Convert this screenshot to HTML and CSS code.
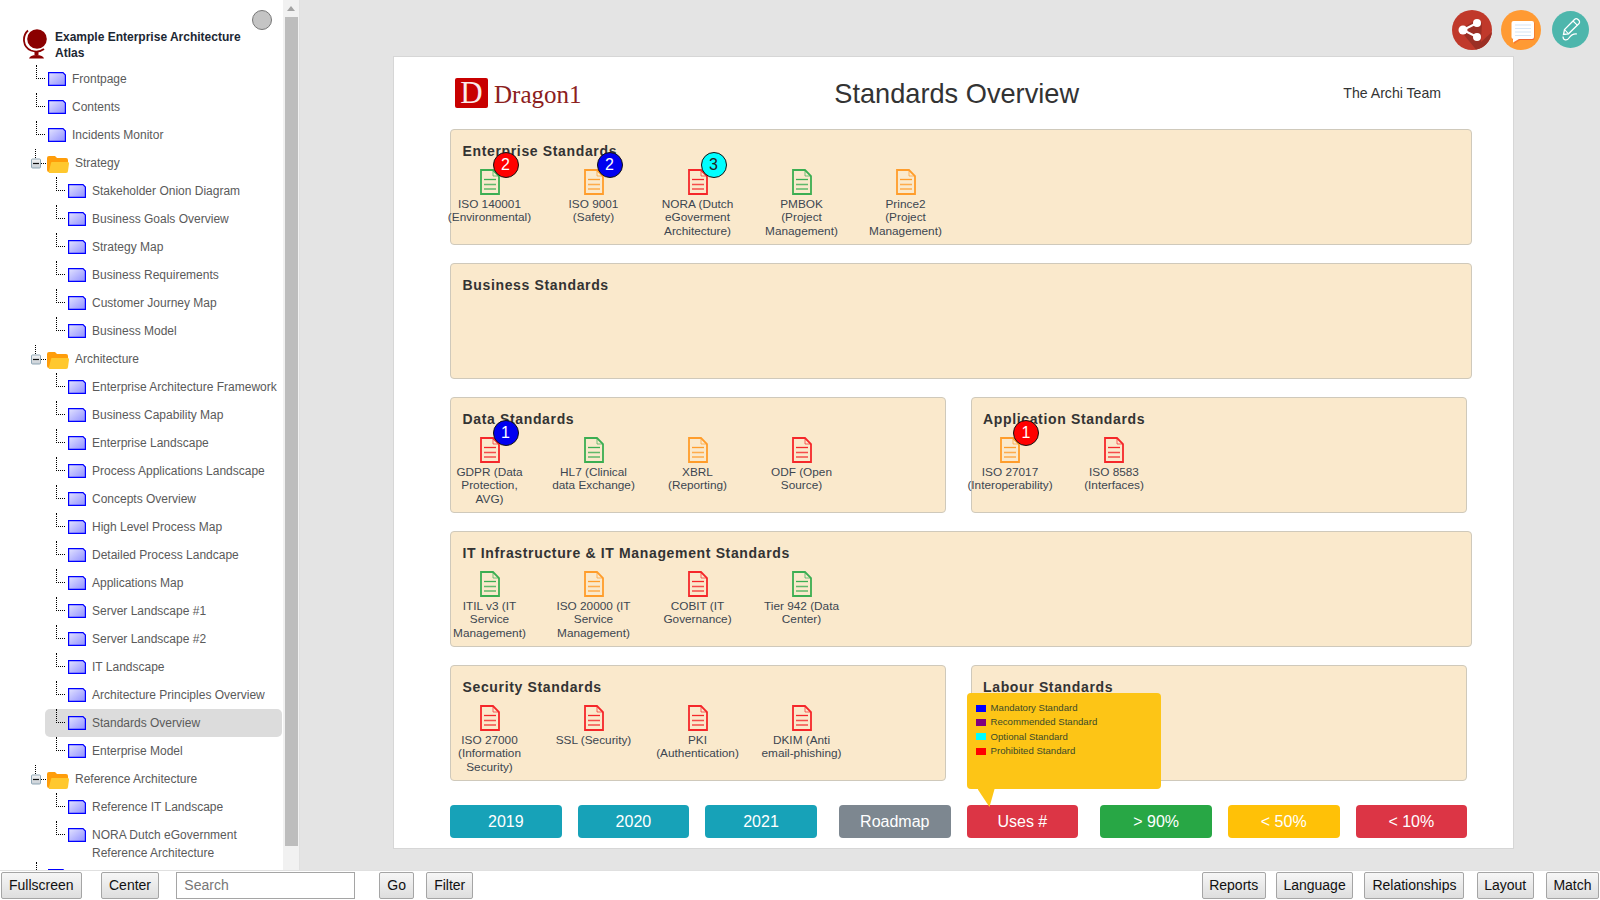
FILE: index.html
```html
<!DOCTYPE html>
<html lang="en">
<head>
<meta charset="utf-8">
<title>Standards Overview</title>
<link rel="stylesheet" href="styles.css">
</head>
<body>
<svg class="defs" width="0" height="0" aria-hidden="true">
  <defs>
    <linearGradient id="pg" x1="0" y1="0" x2="1" y2="1"><stop offset="0" stop-color="#e4e4ff"/><stop offset="1" stop-color="#9090ff"/></linearGradient>
    <linearGradient id="bx" x1="0" y1="0" x2="0" y2="1"><stop offset="0" stop-color="#f4f4f4"/><stop offset="1" stop-color="#c8cfd6"/></linearGradient>
    <symbol id="page" viewBox="0 0 18 14"><path d="M.6 .6H15L17.400 3V13.400H.6Z" fill="url(#pg)" stroke="#0000ff" stroke-width="1.200"/></symbol>
    <symbol id="doc" viewBox="0 0 20 26"><path d="M1 1H13L19 7V25H1Z" fill="none" stroke="currentColor" stroke-width="1.800"/><path d="M13 1V7H19" fill="none" stroke="currentColor" stroke-width="1" opacity=".7"/><path d="M4 10.500H16" stroke="currentColor" stroke-width="1.300"/><path d="M4 15.500H16M4 20H16" stroke="currentColor" stroke-width="1.500" opacity=".8"/></symbol>
    <symbol id="folder" viewBox="0 0 22 18"><path d="M0 3Q0 1 2 1H8L10 3H19Q21 3 21 5V8H6L4 17H2Q0 17 0 15Z" fill="#ff9d0a"/><path d="M5 7H21Q22 7 22 8.500L21 16Q21 18 19 18H3Q1 18 2 16L4 8Q4 7 5 7Z" fill="#ffc82e"/></symbol>
    <symbol id="toggle" viewBox="0 0 16 28"><path d="M4.500 0V9.500M10 14.500H15" stroke="#000" stroke-dasharray="1 1" fill="none"/><rect x=".5" y="10" width="9" height="9" rx="1" fill="url(#bx)" stroke="#8fa6b5"/><path d="M2 14.500H8" stroke="#111" stroke-width="1.200"/></symbol>
  </defs>
</svg>

<div class="main">
  <aside class="side">
    <nav class="tree">
      <span class="knob"></span>
      <div class="atlas">
        <svg class="globe" width="26" height="31" viewBox="0 0 26 31"><circle cx="14" cy="10" r="9.800" fill="#8b0000"/><path d="M5 1.500C-1 7 -.5 18 8 21.500C12 23 17 23 21 20" fill="none" stroke="#8b0000" stroke-width="1.800"/><path d="M11.500 22H15.500V26H11.500Z" fill="#8b0000"/><path d="M6 29.500Q7 26 13.500 26T21 29.500Z" fill="#8b0000"/></svg>
        <div class="atlas-name">Example Enterprise Architecture Atlas</div>
      </div>
      <div class="row l1"><span class="conn"></span><svg class="pg"><use href="#page"/></svg><span class="lbl">Frontpage</span></div>
      <div class="row l1"><span class="conn"></span><svg class="pg"><use href="#page"/></svg><span class="lbl">Contents</span></div>
      <div class="row l1"><span class="conn"></span><svg class="pg"><use href="#page"/></svg><span class="lbl">Incidents Monitor</span></div>
      <div class="row fold"><svg class="tg"><use href="#toggle"/></svg><svg class="fd"><use href="#folder"/></svg><span class="lbl">Strategy</span></div>
      <div class="row l2"><span class="conn"></span><svg class="pg"><use href="#page"/></svg><span class="lbl">Stakeholder Onion Diagram</span></div>
      <div class="row l2"><span class="conn"></span><svg class="pg"><use href="#page"/></svg><span class="lbl">Business Goals Overview</span></div>
      <div class="row l2"><span class="conn"></span><svg class="pg"><use href="#page"/></svg><span class="lbl">Strategy Map</span></div>
      <div class="row l2"><span class="conn"></span><svg class="pg"><use href="#page"/></svg><span class="lbl">Business Requirements</span></div>
      <div class="row l2"><span class="conn"></span><svg class="pg"><use href="#page"/></svg><span class="lbl">Customer Journey Map</span></div>
      <div class="row l2"><span class="conn"></span><svg class="pg"><use href="#page"/></svg><span class="lbl">Business Model</span></div>
      <div class="row fold"><svg class="tg"><use href="#toggle"/></svg><svg class="fd"><use href="#folder"/></svg><span class="lbl">Architecture</span></div>
      <div class="row l2"><span class="conn"></span><svg class="pg"><use href="#page"/></svg><span class="lbl">Enterprise Architecture Framework</span></div>
      <div class="row l2"><span class="conn"></span><svg class="pg"><use href="#page"/></svg><span class="lbl">Business Capability Map</span></div>
      <div class="row l2"><span class="conn"></span><svg class="pg"><use href="#page"/></svg><span class="lbl">Enterprise Landscape</span></div>
      <div class="row l2"><span class="conn"></span><svg class="pg"><use href="#page"/></svg><span class="lbl">Process Applications Landscape</span></div>
      <div class="row l2"><span class="conn"></span><svg class="pg"><use href="#page"/></svg><span class="lbl">Concepts Overview</span></div>
      <div class="row l2"><span class="conn"></span><svg class="pg"><use href="#page"/></svg><span class="lbl">High Level Process Map</span></div>
      <div class="row l2"><span class="conn"></span><svg class="pg"><use href="#page"/></svg><span class="lbl">Detailed Process Landcape</span></div>
      <div class="row l2"><span class="conn"></span><svg class="pg"><use href="#page"/></svg><span class="lbl">Applications Map</span></div>
      <div class="row l2"><span class="conn"></span><svg class="pg"><use href="#page"/></svg><span class="lbl">Server Landscape #1</span></div>
      <div class="row l2"><span class="conn"></span><svg class="pg"><use href="#page"/></svg><span class="lbl">Server Landscape #2</span></div>
      <div class="row l2"><span class="conn"></span><svg class="pg"><use href="#page"/></svg><span class="lbl">IT Landscape</span></div>
      <div class="row l2"><span class="conn"></span><svg class="pg"><use href="#page"/></svg><span class="lbl">Architecture Principles Overview</span></div>
      <div class="row l2 current"><span class="conn"></span><svg class="pg"><use href="#page"/></svg><span class="lbl">Standards Overview</span></div>
      <div class="row l2"><span class="conn"></span><svg class="pg"><use href="#page"/></svg><span class="lbl">Enterprise Model</span></div>
      <div class="row fold"><svg class="tg"><use href="#toggle"/></svg><svg class="fd"><use href="#folder"/></svg><span class="lbl">Reference Architecture</span></div>
      <div class="row l2"><span class="conn"></span><svg class="pg"><use href="#page"/></svg><span class="lbl">Reference IT Landscape</span></div>
      <div class="row l2 two"><span class="conn"></span><svg class="pg"><use href="#page"/></svg><span class="lbl">NORA Dutch eGovernment<br>Reference Architecture</span></div>
      <div class="row l1"><span class="conn"></span><svg class="pg"><use href="#page"/></svg></div>
    </nav>
    <div class="scroll"><span class="arrow"></span><span class="thumb"></span></div>
  </aside>

  <main class="canvas">
    <div class="tools">
      <svg class="tool" width="40" height="40" viewBox="0 0 40 40"><circle cx="20" cy="20" r="20" fill="#c0392b"/><path d="M8 20L25 9L30 13L29 32L40 22A20 20 0 0 1 24 39.500Z" fill="#9b2f25"/><path d="M25 13L11 20L25 27" fill="none" stroke="#fff" stroke-width="2"/><circle cx="25" cy="13" r="4" fill="#fff"/><circle cx="11" cy="20" r="4.500" fill="#fff"/><circle cx="25" cy="27" r="4" fill="#fff"/></svg>
      <svg class="tool" width="40" height="40" viewBox="0 0 40 40"><circle cx="20" cy="20" r="20" fill="#ff9a33"/><path d="M13 30V34L19 30Z" fill="#f0562a" opacity=".5"/><rect x="11" y="11.500" width="22.500" height="18.500" rx="2" fill="#f0652f"/><rect x="10.500" y="11" width="22.500" height="18" rx="2" fill="#fff"/><path d="M12 29V32.500L18 29Z" fill="#fff"/><path d="M14 15H30M14 18.500H30M14 22H30M14 25.500H30" stroke="#d6e6f5" stroke-width="1.200"/></svg>
      <svg class="tool pen" width="37" height="37" viewBox="0 0 37 37"><circle cx="18.500" cy="18.500" r="18.500" fill="#4db6ac"/><path d="M11.500 23.500L12.500 18.500L22.500 8.500C23.500 7.500 25 7.500 26 8.500L26.800 9.300C27.800 10.300 27.800 11.700 26.800 12.700L16.500 22.800Z" fill="none" stroke="#fff" stroke-width="1.300"/><path d="M21 10L25.500 14.300M12.500 18.500L16.500 22.800" stroke="#fff" stroke-width="1.100"/><path d="M11 25.500C11 29.500 15 30 17 27C19 24 21 22.500 25 23" fill="none" stroke="#fff" stroke-width="1.200"/></svg>
    </div>

    <article class="sheet">
      <header class="head">
        <div class="logo"><span class="logo-d">D</span><span class="logo-name">Dragon1</span></div>
        <h1 class="title">Standards Overview</h1>
        <div class="team">The Archi Team</div>
      </header>

      <section class="card">
        <h2 class="card-title">Enterprise Standards</h2>
        <div class="items">
          <div class="std"><span class="doc-box"><svg class="doc green"><use href="#doc"/></svg><span class="badge red">2</span></span><span class="name">ISO 140001 (Environmental)</span></div>
          <div class="std"><span class="doc-box"><svg class="doc orange"><use href="#doc"/></svg><span class="badge blue">2</span></span><span class="name">ISO 9001 (Safety)</span></div>
          <div class="std"><span class="doc-box"><svg class="doc crimson"><use href="#doc"/></svg><span class="badge cyan">3</span></span><span class="name">NORA (Dutch eGoverment Architecture)</span></div>
          <div class="std"><span class="doc-box"><svg class="doc green"><use href="#doc"/></svg></span><span class="name">PMBOK (Project Management)</span></div>
          <div class="std"><span class="doc-box"><svg class="doc orange"><use href="#doc"/></svg></span><span class="name">Prince2 (Project Management)</span></div>
        </div>
      </section>

      <section class="card">
        <h2 class="card-title">Business Standards</h2>
      </section>

      <div class="pair">
        <section class="card">
          <h2 class="card-title">Data Standards</h2>
          <div class="items">
            <div class="std"><span class="doc-box"><svg class="doc crimson"><use href="#doc"/></svg><span class="badge blue">1</span></span><span class="name">GDPR (Data Protection, AVG)</span></div>
            <div class="std"><span class="doc-box"><svg class="doc green"><use href="#doc"/></svg></span><span class="name">HL7 (Clinical data Exchange)</span></div>
            <div class="std"><span class="doc-box"><svg class="doc orange"><use href="#doc"/></svg></span><span class="name">XBRL (Reporting)</span></div>
            <div class="std"><span class="doc-box"><svg class="doc crimson"><use href="#doc"/></svg></span><span class="name">ODF (Open Source)</span></div>
          </div>
        </section>
        <section class="card">
          <h2 class="card-title">Application Standards</h2>
          <div class="items">
            <div class="std"><span class="doc-box"><svg class="doc orange"><use href="#doc"/></svg><span class="badge red">1</span></span><span class="name">ISO 27017 (Interoperability)</span></div>
            <div class="std"><span class="doc-box"><svg class="doc crimson"><use href="#doc"/></svg></span><span class="name">ISO 8583 (Interfaces)</span></div>
          </div>
        </section>
      </div>

      <section class="card">
        <h2 class="card-title">IT Infrastructure &amp; IT Management Standards</h2>
        <div class="items">
          <div class="std"><span class="doc-box"><svg class="doc green"><use href="#doc"/></svg></span><span class="name">ITIL v3 (IT Service Management)</span></div>
          <div class="std"><span class="doc-box"><svg class="doc orange"><use href="#doc"/></svg></span><span class="name">ISO 20000 (IT Service Management)</span></div>
          <div class="std"><span class="doc-box"><svg class="doc crimson"><use href="#doc"/></svg></span><span class="name">COBIT (IT Governance)</span></div>
          <div class="std"><span class="doc-box"><svg class="doc green"><use href="#doc"/></svg></span><span class="name">Tier 942 (Data Center)</span></div>
        </div>
      </section>

      <div class="pair">
        <section class="card">
          <h2 class="card-title">Security Standards</h2>
          <div class="items">
            <div class="std"><span class="doc-box"><svg class="doc crimson"><use href="#doc"/></svg></span><span class="name">ISO 27000 (Information Security)</span></div>
            <div class="std"><span class="doc-box"><svg class="doc crimson"><use href="#doc"/></svg></span><span class="name">SSL (Security)</span></div>
            <div class="std"><span class="doc-box"><svg class="doc crimson"><use href="#doc"/></svg></span><span class="name">PKI (Authentication)</span></div>
            <div class="std"><span class="doc-box"><svg class="doc crimson"><use href="#doc"/></svg></span><span class="name">DKIM (Anti email-phishing)</span></div>
          </div>
        </section>
        <section class="card">
          <h2 class="card-title">Labour Standards</h2>
        </section>
      </div>

      <div class="filters">
        <div class="pill teal">2019</div>
        <div class="pill teal">2020</div>
        <div class="pill teal">2021</div>
        <div class="pill grey wide-gap">Roadmap</div>
        <div class="pill rose">Uses #
          <div class="legend">
            <div class="key"><span class="swatch s-blue"></span>Mandatory Standard</div>
            <div class="key"><span class="swatch s-purple"></span>Recommended Standard</div>
            <div class="key"><span class="swatch s-cyan"></span>Optional Standard</div>
            <div class="key"><span class="swatch s-red"></span>Prohibited Standard</div>
          </div>
        </div>
        <div class="pill lime wide-gap">&gt; 90%</div>
        <div class="pill amber">&lt; 50%</div>
        <div class="pill rose">&lt; 10%</div>
      </div>
    </article>
  </main>
</div>

<footer class="bar">
  <button class="btn">Fullscreen</button>
  <button class="btn g19">Center</button>
  <input class="search g17" type="text" placeholder="Search">
  <button class="btn g24">Go</button>
  <button class="btn g12">Filter</button>
  <button class="btn semi push">Reports</button>
  <button class="btn semi g10">Language</button>
  <button class="btn g11">Relationships</button>
  <button class="btn semi g12">Layout</button>
  <button class="btn semi g12">Match</button>
</footer>
</body>
</html>
```
FILE: styles.css
```css
* { box-sizing: border-box; }
html, body { margin: 0; height: 100%; }
body {
  width: 1600px; height: 900px; overflow: hidden;
  display: flex; flex-direction: column;
  font-family: "Liberation Sans", Arial, sans-serif;
  background: #fff; color: #333;
}
.defs { position: absolute; }

.main { display: flex; height: 870px; flex: none; }

/* sidebar */
.side { width: 300px; flex: none; display: flex; background: #fff; }
.tree { width: 283px; flex: none; overflow: hidden; position: relative; padding-top: 29px; }
.knob {
  position: absolute; left: 252px; top: 10px;
  width: 20px; height: 20px; border-radius: 50%;
  background: #c4c4c4; border: 1px solid #777;
}
.atlas { display: flex; padding-left: 23px; height: 36px; }
.globe { flex: none; margin-top: 0; }
.atlas-name { margin-left: 6px; width: 200px; font-size: 12px; font-weight: bold; line-height: 16px; color: #1c2733; }

.row { display: flex; min-height: 28px; font-size: 12px; color: #5a5a5a; }
.l1 { padding-left: 36px; }
.l2 { padding-left: 56px; }
.fold { padding-left: 31px; }
.conn { flex: none; width: 9px; height: 14px; border-left: 1px dotted #000; border-bottom: 1px dotted #000; margin-right: 3px; }
.pg { flex: none; width: 18px; height: 14px; margin-top: 7px; }
.lbl { margin-left: 6px; padding: 5px 0; line-height: 18px; white-space: nowrap; }
.tg { flex: none; width: 16px; height: 28px; }
.fd { flex: none; width: 22px; height: 18px; margin-top: 6px; }
.current { margin-left: 45px; margin-right: 1px; padding-left: 11px; background: #dcdcdc; border-radius: 5px; }
.two { margin-bottom: -5px; }

.scroll { width: 17px; flex: none; background: #f1f1f1; padding: 0 2px; margin-right: 0; position: relative; border-right: 1px solid #e0e0e0; }
.arrow {
  display: block; width: 8px; height: 5px; margin: 6px auto 6px;
  background: #a3a3a3; clip-path: polygon(50% 0, 100% 100%, 0 100%);
}
.thumb { display: block; width: 13px; height: 829px; background: #bdbdbd; }

/* canvas */
.canvas { flex: 1; background: #e4e4e4; min-width: 0; }
.tools { height: 56px; display: flex; justify-content: flex-end; align-items: flex-start; gap: 9px; padding: 10px 11px 0 0; }
.tool { flex: none; }
.pen { margin: 1px 0 0 2px; }

.sheet {
  width: 1121px; height: 793px; margin-left: 93px;
  background: #fff; border: 1px solid #d6d6d6;
  padding: 0 41px 0 56px;
}
.head { height: 72px; display: flex; align-items: center; padding: 0 31px 0 5px; }
.logo { display: flex; align-items: center; width: 127px; flex: none; }
.logo-d {
  width: 33px; height: 30px; background: #c80000; border-radius: 2px;
  color: #fbeaea; font: 31px/30px "Liberation Serif", serif; text-align: center;
}
.logo-name { margin: 3px 0 0 6px; font: 25px/30px "Liberation Serif", serif; color: #8c2020; }
.title { flex: 1; margin: 0; padding: 2px 12px 0 0; text-align: center; font-size: 27.2px; font-weight: normal; color: #333; }
.team { flex: none; font-size: 14.1px; color: #333; }

.card {
  height: 116px; margin-bottom: 18px; padding-top: 12px;
  background: #fae9cc; border: 1px solid #cfc9bb; border-radius: 4px;
}
.card-title { margin: 0; padding-left: 11.5px; font-size: 14px; line-height: 18px; font-weight: bold; letter-spacing: .65px; color: #333; }
.items { display: flex; gap: 20.5px; margin: 9px 0 0 -3.25px; }
.std { width: 83.5px; flex: none; display: flex; flex-direction: column; align-items: center; text-align: center; }
.doc-box { position: relative; display: block; width: 20px; height: 26px; }
.doc { display: block; width: 20px; height: 26px; }
.green { color: #3bae52; }
.orange { color: #ff9d2b; }
.crimson { color: #f5272a; }
.name { margin-top: 2.5px; font-size: 11.8px; line-height: 13.7px; color: #3c4650; }
.badge {
  position: absolute; left: 13px; top: -17px;
  width: 26px; height: 26px; border-radius: 50%; border: 1px solid #111;
  font-size: 16px; line-height: 24px; text-align: center; color: #fff;
}
.red { background: #ff0000; }
.blue { background: #0000f0; }
.cyan { background: #00ffff; color: #222; }

.pair { display: grid; grid-template-columns: 496px 496.5px; column-gap: 24.5px; }

.filters { display: flex; gap: 16px; margin-top: 6px; }
.pill {
  position: relative; width: 111.6px; height: 33px; flex: none;
  border-radius: 4px; color: #fff; font-size: 16px; line-height: 33px; text-align: center;
}
.wide-gap { margin-left: 6.2px; }
.teal { background: #17a2b8; }
.grey { background: #7d8790; }
.rose { background: #dc3545; }
.lime { background: #28a745; }
.amber { background: #ffc107; }

.legend {
  position: absolute; left: 0; bottom: 49px; z-index: 2;
  width: 194px; height: 96px; padding: 8px 9px;
  background: #fdc516; border-radius: 4px;
  text-align: left; color: #3b4a2a; font-size: 9.6px; line-height: 14.3px;
}
.legend::after {
  content: ""; position: absolute; left: 11px; top: 96px;
  width: 17px; height: 18px; background: #fdc516;
  clip-path: polygon(0 0, 100% 0, 70% 100%);
}
.key { display: flex; align-items: center; }
.swatch { width: 10px; height: 7px; margin-right: 5px; flex: none; }
.s-blue { background: #0000ff; }
.s-purple { background: #800080; }
.s-cyan { background: #00ffff; }
.s-red { background: #ff0000; }

/* bottom bar */
.bar { height: 30px; flex: none; display: flex; align-items: flex-start; padding: 1px 1px 0; background: #fff; border-top: 1px solid #e0e0e0; }
.btn {
  height: 27px; padding: 0 7px 2px; margin: 0;
  border: 1px solid #a5a5a5; border-radius: 2px;
  background: linear-gradient(#f6f6f6, #dedede);
  font: 14px "Liberation Sans", Arial, sans-serif; color: #111;
}
.semi { padding: 0 6.5px 2px; }
.search {
  width: 178.6px; height: 27px; padding: 0 7px 2px; margin: 0;
  border: 1px solid #a5a5a5; background: #fff;
  font: 14px "Liberation Sans", Arial, sans-serif;
}
.search::placeholder { color: #777; }
.g19 { margin-left: 19.4px; }
.g17 { margin-left: 17.3px; }
.g24 { margin-left: 24.4px; }
.g12 { margin-left: 12.2px; }
.g10 { margin-left: 10.2px; }
.g11 { margin-left: 11.2px; }
.push { margin-left: auto; }
```
